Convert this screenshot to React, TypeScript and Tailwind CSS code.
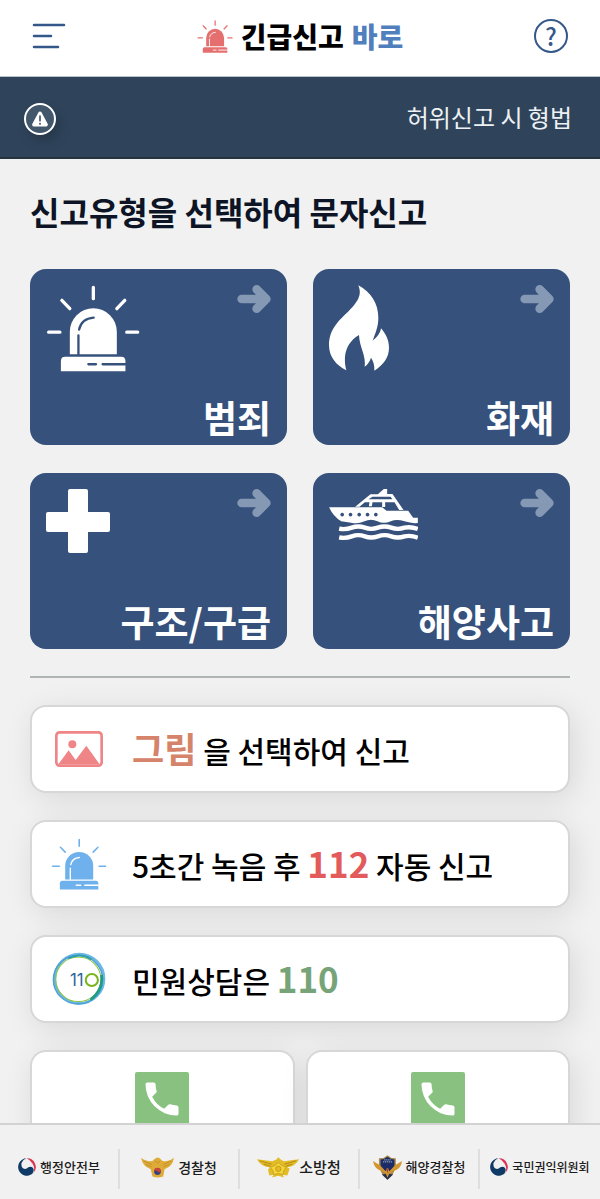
import type { ReactNode } from 'react'

function SirenIcon({ className, gap, ray = 10 }: { className: string; gap: string; ray?: number }) {
    return (
        <svg viewBox="78 316 284 262" className={className} aria-hidden="true">
            <g stroke="currentColor" strokeWidth={ray} strokeLinecap="round">
                <path d="M221 323V357M126 362L150 387M316 362L292 387M86 458H120M322 458H355" />
            </g>
            <path d="M150 525V457a71 71 0 0 1 142 0V525Z" fill="currentColor" />
            <path d="M123 576V545q0-13 13-13H305q13 0 13 13V576Z" fill="currentColor" />
            <g stroke={gap} strokeWidth="7" fill="none" strokeLinecap="round">
                <path d="M178 450Q185 417 222 414M176 468V525" />
                <path d="M206 555H229M249 555H318" />
            </g>
        </svg>
    )
}

function FireIcon() {
    return (
        <svg viewBox="90 77 180 256" className="w-[60px] h-[86px]" fill="currentColor" aria-hidden="true">
            <path d="M178 77C216 97 238 132 238 174C238 203 228 222 221 243C234 233 244 220 246 206C260 222 270 241 270 264C270 294 253 315 226 333C227 317 223 304 216 294C212 305 207 314 197 321C202 289 181 262 180 226C148 245 129 279 142 332C111 317 90 291 90 257C90 195 138 171 166 135C182 116 187 99 178 77Z" />
        </svg>
    )
}

function CrossIcon() {
    return (
        <svg viewBox="0 0 64 64" className="w-16 h-16" fill="currentColor" aria-hidden="true">
            <rect x="22" y="0" width="20" height="64" rx="2" />
            <rect x="0" y="23" width="64" height="20" rx="2" />
        </svg>
    )
}

function BoatIcon() {
    return (
        <svg viewBox="90 72 266 153" className="w-[89px] h-[51px]" fill="currentColor" aria-hidden="true">
            <path
                fillRule="evenodd"
                d="M90 127H249L262 137H327L342 158H356V174Q337 176 316 169Q292 161 275 169Q253 178 235 169Q215 160 196 169Q175 178 156 173L126 169Q101 153 90 127ZM129 143.500a5.500 5.500 0 1 0 .1 0ZM154 143.500a5.500 5.500 0 1 0 .1 0ZM180 143.500a5.500 5.500 0 1 0 .1 0ZM205 143.500a5.500 5.500 0 1 0 .1 0ZM230 143.500a5.500 5.500 0 1 0 .1 0Z"
            />
            <path
                fillRule="evenodd"
                d="M168 125L214 88H236L254 72H264V87H280L313 135H300L286 112H258V126H249V112H220L218 124H209L211 112H197L181 125ZM208 103H280L274 95H220Z"
            />
            <g fill="none" stroke="currentColor" strokeWidth="13">
                <path d="M120 191Q138 195 158 188Q177 181 197 188Q216 195 236 188Q256 181 276 188Q296 195 316 188Q336 184 356 192" />
                <path d="M120 217Q138 221 158 214Q177 207 197 214Q216 221 236 214Q256 207 276 214Q296 221 316 214Q336 210 356 218" />
            </g>
        </svg>
    )
}

function ArrowIcon() {
    return (
        <svg viewBox="0 0 100 84" className="w-[34px] h-7 text-[#8599b4]" fill="none" stroke="currentColor" strokeWidth="26" strokeLinecap="round" strokeLinejoin="round" aria-hidden="true">
            <path d="M13 42H80M58 13L87 42L58 71" />
        </svg>
    )
}

function PictureIcon() {
    return (
        <svg viewBox="0 0 144 108" className="w-12 h-9" aria-hidden="true">
            <rect x="4" y="4" width="136" height="100" rx="10" fill="none" stroke="#ef8586" strokeWidth="8" />
            <circle cx="52" cy="40" r="12" fill="#ef8586" />
            <path d="M10 100L41 58L62 87L94 44L134 100Z" fill="#ef8586" />
        </svg>
    )
}

function CallCenterIcon() {
    return (
        <svg viewBox="0 0 160 160" className="w-[54px] h-[54px]" aria-hidden="true">
            <g fill="none">
                <ellipse cx="81" cy="79" rx="73" ry="73" stroke="#6bb7e6" strokeWidth="8" />
                <ellipse cx="77" cy="82" rx="73" ry="72" stroke="#4d9fd6" strokeWidth="4" />
                <ellipse cx="78" cy="81" rx="67" ry="66" stroke="#8cc63f" strokeWidth="3" />
                <path d="M147 68Q152 113 114 142" stroke="#1f9b86" strokeWidth="8" />
                <path d="M48 19Q84 0 117 22" stroke="#2f9db0" strokeWidth="6" />
                <circle cx="118" cy="83" r="18" stroke="#7ab51d" strokeWidth="6" />
            </g>
            <text x="53" y="101" fill="#31659c" fontFamily="Inter, sans-serif" fontSize="50" fontWeight="400">11</text>
        </svg>
    )
}

function GovIcon() {
    return (
        <svg viewBox="0 0 54 54" className="w-[18px] h-[18px] shrink-0" aria-hidden="true">
            <path d="M26 1A26 26 0 0 1 46 45Q52 30 44 17Q37 6 26 1Z" fill="#dc3353" />
            <path d="M25 1A26 26 0 1 0 43 47Q50 37 45 30Q39 23 31 28Q23 36 15 31Q8 25 11 14Q15 5 25 1Z" fill="#0f3a66" />
        </svg>
    )
}

function PoliceIcon() {
    return (
        <svg viewBox="0 0 98 62" className="w-[33px] h-[21px] shrink-0" aria-hidden="true">
            <path d="M0 2Q14 14 34 12L40 6Q49-2 56 4L64 12Q84 14 98 2Q94 28 70 36L66 58Q49 64 34 58L29 36Q5 28 0 2Z" fill="#dfab38" />
            <path d="M8 12L32 22M14 22L32 29M90 12L66 22M84 22L66 29M41 11L49 18L57 11" fill="none" stroke="#b98522" strokeWidth="2" />
            <circle cx="49" cy="43" r="10" fill="#37427c" />
            <path d="M39 42a10 10 0 0 1 20 0Q54 48 49 43T39 42Z" fill="#c9443b" />
        </svg>
    )
}

function FireAgencyIcon() {
    return (
        <svg viewBox="0 0 126 62" className="w-[42px] h-[21px] shrink-0" aria-hidden="true">
            <path d="M0 6L46 12L58 7L64 0L71 7L80 12L126 6Q116 27 91 30L98 35L91 55L77 53L81 61L64 56L45 61L50 53L37 55L33 37L39 31Q10 27 0 6Z" fill="#e2bb26" />
            <path d="M8 11L44 21M20 21L40 27M118 11L82 21M106 21L86 27" stroke="#b58a18" strokeWidth="3" />
            <path d="M64 16L74 25L87 30L80 41L78 52L64 49L50 52L48 41L40 30L54 25Z" fill="#f4d637" stroke="#bd9820" strokeWidth="2" />
            <circle cx="64" cy="35" r="8" fill="#e7b923" stroke="#b58a18" strokeWidth="2" />
        </svg>
    )
}

function CoastGuardIcon() {
    return (
        <svg viewBox="0 0 88 74" className="w-[29px] h-[25px] shrink-0" aria-hidden="true">
            <path d="M44 0L56 8L69 9L70 36L59 60L44 74L29 60L18 36L18 9L32 8Z" fill="#a98a48" />
            <path d="M44 4L55 11L65 13V34L44 55L23 34V13L33 11Z" fill="#1c2c66" />
            <path d="M0 17L22 31L38 48L44 38L50 48L66 31L88 17Q85 42 62 47L52 54L44 69L36 54L27 47Q4 42 0 17Z" fill="#d3952f" />
            <path d="M27 58L39 56L44 68L49 56L61 58L44 74Z" fill="#293052" />
            <path d="M30 20H58M34 14H54" stroke="#a9b5d8" strokeWidth="3" strokeDasharray="4 2" />
            <path d="M40 40L44 55L48 40Z" fill="#a84635" />
        </svg>
    )
}

const tiles = [
    { label: '범죄', icon: <SirenIcon className="w-[94px] h-[87px]" gap="#36517b" /> },
    { label: '화재', icon: <FireIcon /> },
    { label: '구조/구급', icon: <CrossIcon /> },
    { label: '해양사고', icon: <BoatIcon /> },
]

const agencies = [
    { name: '행정안전부', icon: <GovIcon />, size: 'text-[13px] gap-1' },
    { name: '경찰청', icon: <PoliceIcon />, size: 'text-sm gap-1' },
    { name: '소방청', icon: <FireAgencyIcon />, size: 'text-[15px]' },
    { name: '해양경찰청', icon: <CoastGuardIcon />, size: 'text-[13px] gap-1' },
    { name: '국민권익위원회', icon: <GovIcon />, size: 'text-[12px] gap-1' },
]

const card = 'bg-white border-2 border-[#d7d7d7] rounded-2xl shadow-[4px_6px_30px_rgba(0,0,0,0.1)]'

function ActionRow({ icon, children }: { icon: ReactNode; children: ReactNode }) {
    return (
        <button type="button" className={`${card} w-full h-[88px] flex items-center pl-5 text-left`}>
            <span className="w-[54px] mr-[26px] shrink-0 flex justify-center">{icon}</span>
            <span className="text-[30px] leading-10 font-medium text-black whitespace-nowrap">{children}</span>
        </button>
    )
}

export default function App() {
    return (
        <div className="h-dvh flex flex-col bg-[#f1f1f1] font-['Noto_Sans_CJK_KR',sans-serif]">
            {/* Header */}
            <header className="h-[77px] shrink-0 bg-white border-b border-[#b9c3cd] flex items-center justify-between px-8 pb-1">
                <button type="button" aria-label="메뉴">
                    <svg viewBox="0 0 34 26" className="w-[34px] h-[26px]" fill="none" stroke="#35588a" strokeWidth="2.5" strokeLinecap="round">
                        <path d="M2 2H32M2 13H19M2 24H26" />
                    </svg>
                </button>
                <h1 className="flex items-center text-[28px] leading-9 font-black text-black">
                    <SirenIcon className="w-9 h-[33px] mr-2 text-[#e56f6f]" gap="#ffffff" />
                    <span className="mr-2">긴급신고</span>
                    <span className="text-[#517fbd]">바로</span>
                </h1>
                <button type="button" aria-label="도움말" className="w-[34px] h-[34px] rounded-full border-2 border-[#35588a] text-[#35588a] text-2xl leading-none font-medium flex items-center justify-center">
                    ?
                </button>
            </header>

            {/* Warning banner */}
            <div className="h-[82px] shrink-0 bg-[#2f445b] border-b-2 border-[#26323e] flex items-center justify-between pl-6 pr-7 overflow-hidden">
                <span className="w-8 h-8 mt-1 rounded-full border-2 border-white bg-[#42566c] flex items-center justify-center shadow-[4px_6px_12px_rgba(0,0,0,0.2)]">
                    <svg viewBox="0 0 48 46" className="w-4 h-4" aria-hidden="true">
                        <path d="M24 6L42 40H6Z" fill="#fff" stroke="#fff" strokeWidth="11" strokeLinejoin="round" />
                        <path d="M24 14V28" stroke="#42566c" strokeWidth="5" strokeLinecap="round" />
                        <circle cx="24" cy="37" r="3" fill="#42566c" />
                    </svg>
                </span>
                <p className="text-2xl text-[#eef1f4] whitespace-nowrap">허위신고 시 형법</p>
            </div>

            <main className="flex-1 min-h-0 overflow-y-auto [scrollbar-width:none] px-[30px]">
                <h2 className="mt-8 text-[32px] leading-10 font-bold text-[#0c1426]">신고유형을 선택하여 문자신고</h2>

                {/* Report types */}
                <div className="mt-[38px] grid grid-cols-2 gap-x-[26px] gap-y-7">
                    {tiles.map(tile => (
                        <button key={tile.label} type="button" className="h-44 bg-[#36517b] rounded-2xl text-white flex flex-col justify-between px-4 pt-4 pb-1.5">
                            <span className="w-full h-0 flex items-start justify-between">
                                {tile.icon}
                                <ArrowIcon />
                            </span>
                            <span className="self-end text-[37px] leading-[44px] font-bold">{tile.label}</span>
                        </button>
                    ))}
                </div>

                <hr className="mt-[27px] mb-[27px] border-t-2 border-[#b0b5b4]" />

                {/* Quick actions */}
                <div className="flex flex-col gap-[27px]">
                    <ActionRow icon={<PictureIcon />}>
                        <strong className="text-[35px] font-bold text-[#d5836a]">그림</strong> 을 선택하여 신고
                    </ActionRow>
                    <ActionRow icon={<SirenIcon className="w-14 h-[52px] shrink-0 text-[#6fb1ec]" gap="#ffffff" ray={8} />}>
                        5초간 녹음 후 <strong className="text-[35px] font-bold text-[#e25a5a]">112</strong> 자동 신고
                    </ActionRow>
                    <ActionRow icon={<CallCenterIcon />}>
                        민원상담은 <strong className="text-[35px] font-bold text-[#76a377]">110</strong>
                    </ActionRow>
                    <div className="grid grid-cols-2 gap-[11px]">
                        {['전화 신고', '전화 상담'].map(name => (
                            <button key={name} type="button" aria-label={name} className={`${card} h-[120px] flex justify-center pt-5`}>
                                <span className="w-[54px] h-[54px] rounded-xs bg-[#89c181] text-white flex items-center justify-center">
                                    <svg viewBox="0 0 24 24" className="w-11 h-11" fill="currentColor" aria-hidden="true">
                                        <path d="M20 15.500c-1.250 0-2.450-.2-3.570-.57a1 1 0 0 0-1.020.24l-2.200 2.200a15.100 15.100 0 0 1-6.590-6.590l2.200-2.210a.96.96 0 0 0 .25-1A11.360 11.360 0 0 1 8.500 4a1 1 0 0 0-1-1H4a1 1 0 0 0-1 1 17 17 0 0 0 17 17 1 1 0 0 0 1-1v-3.500a1 1 0 0 0-1-1z" />
                                    </svg>
                                </span>
                            </button>
                        ))}
                    </div>
                </div>
            </main>

            {/* Agencies */}
            <footer className="h-[76px] shrink-0 border-t-2 border-[#d2d2d2] pt-6 pb-2 grid grid-cols-5 divide-x-2 divide-[#dedede]">
                {agencies.map(agency => (
                    <div key={agency.name} className={`h-10 pb-1 flex items-center justify-center font-medium text-[#1c1c1c] whitespace-nowrap ${agency.size}`}>
                        {agency.icon}
                        <span>{agency.name}</span>
                    </div>
                ))}
            </footer>
        </div>
    )
}
